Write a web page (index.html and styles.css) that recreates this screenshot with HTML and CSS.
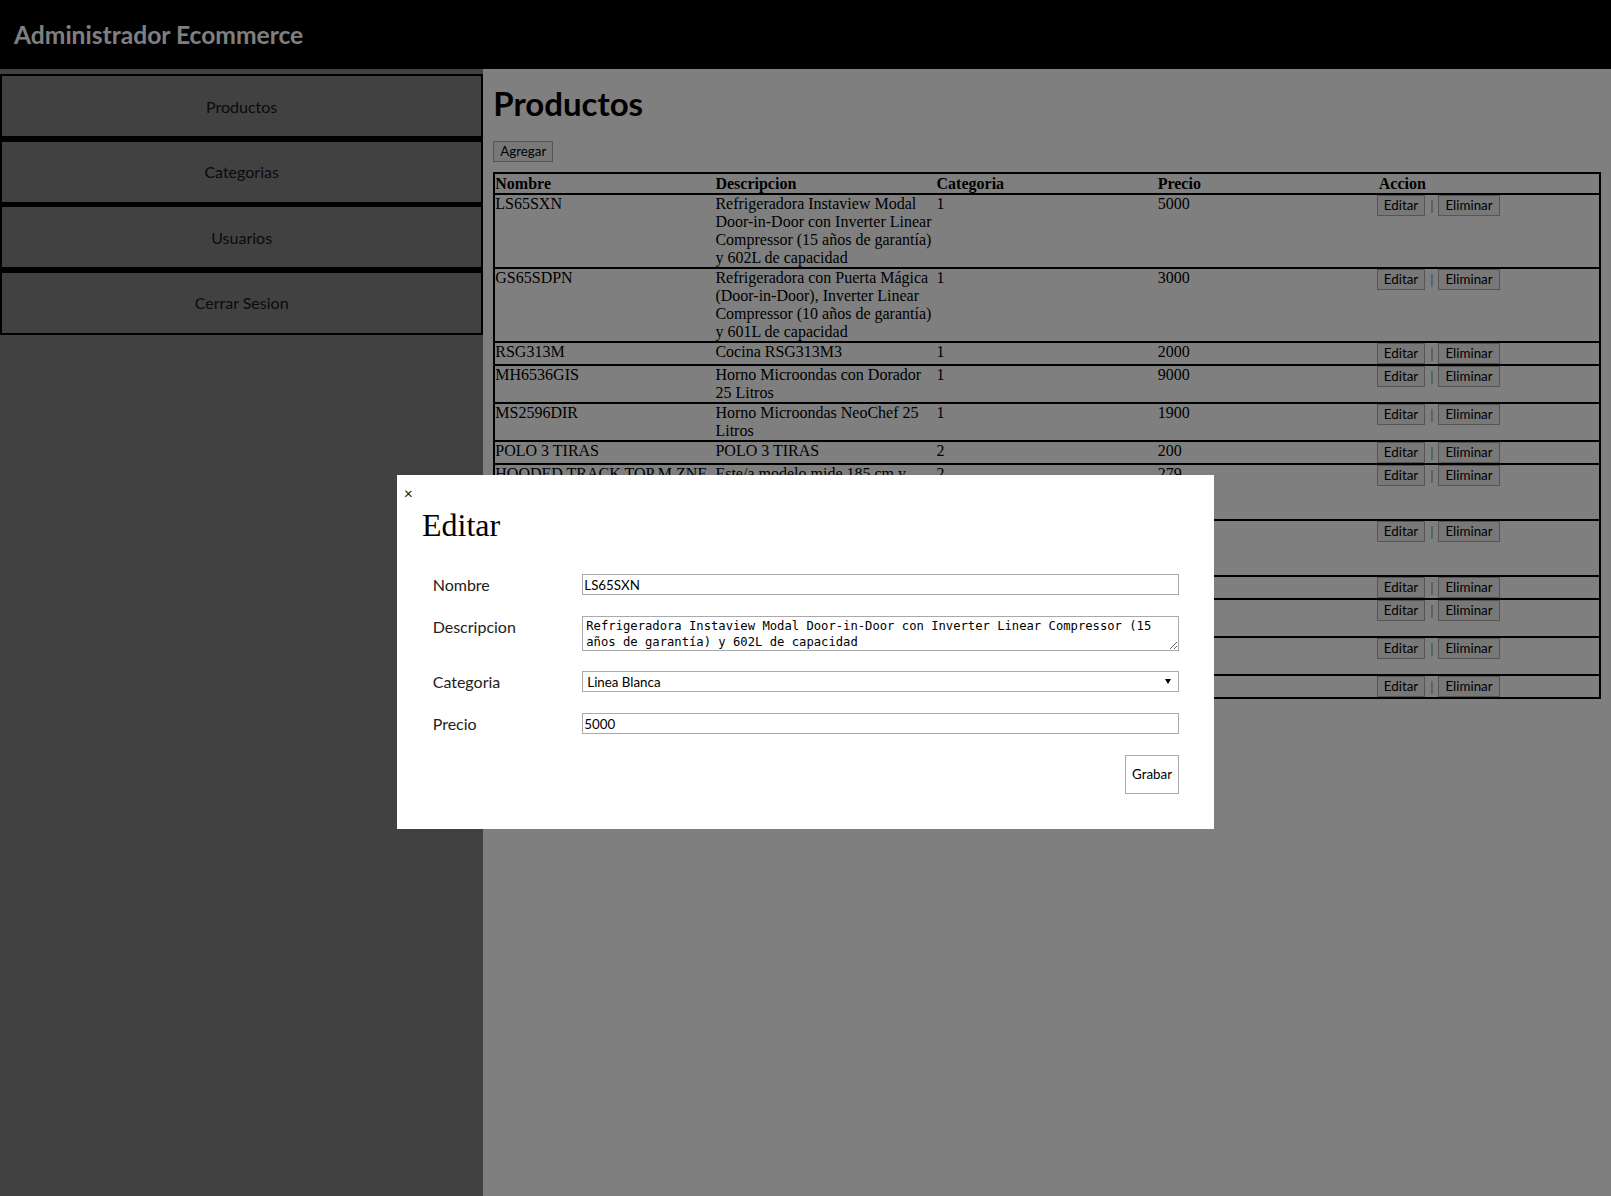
FILE: index.html
```html
<!DOCTYPE html>
<html lang="es">
<head>
<meta charset="utf-8">
<title>Administrador Ecommerce</title>
<link rel="stylesheet" href="styles.css">
</head>
<body>
<header class="topbar"><span class="brand">Administrador Ecommerce</span></header>
<div class="layout">
  <aside class="sidebar">
    <nav class="nav">
      <a class="nav-item" href="#">Productos</a>
      <a class="nav-item" href="#">Categorias</a>
      <a class="nav-item" href="#">Usuarios</a>
      <a class="nav-item" href="#">Cerrar Sesion</a>
    </nav>
  </aside>
  <main class="content">
    <h1 class="page-title">Productos</h1>
    <div class="toolbar"><button class="btn">Agregar</button></div>
    <table class="grid">
      <thead>
        <tr><th>Nombre</th><th>Descripcion</th><th>Categoria</th><th>Precio</th><th>Accion</th></tr>
      </thead>
      <tbody>
        <tr><td>LS65SXN</td><td>Refrigeradora Instaview Modal Door-in-Door con Inverter Linear Compressor (15 años de garantía) y 602L de capacidad</td><td>1</td><td>5000</td><td><div class="actions"><button class="btn">Editar</button><span class="sep">|</span><button class="btn">Eliminar</button></div></td></tr>
        <tr><td>GS65SDPN</td><td>Refrigeradora con Puerta Mágica (Door-in-Door), Inverter Linear Compressor (10 años de garantía) y 601L de capacidad</td><td>1</td><td>3000</td><td><div class="actions"><button class="btn">Editar</button><span class="sep">|</span><button class="btn">Eliminar</button></div></td></tr>
        <tr><td>RSG313M</td><td>Cocina RSG313M3</td><td>1</td><td>2000</td><td><div class="actions"><button class="btn">Editar</button><span class="sep">|</span><button class="btn">Eliminar</button></div></td></tr>
        <tr><td>MH6536GIS</td><td>Horno Microondas con Dorador 25 Litros</td><td>1</td><td>9000</td><td><div class="actions"><button class="btn">Editar</button><span class="sep">|</span><button class="btn">Eliminar</button></div></td></tr>
        <tr><td>MS2596DIR</td><td>Horno Microondas NeoChef 25 Litros</td><td>1</td><td>1900</td><td><div class="actions"><button class="btn">Editar</button><span class="sep">|</span><button class="btn">Eliminar</button></div></td></tr>
        <tr><td>POLO 3 TIRAS</td><td>POLO 3 TIRAS</td><td>2</td><td>200</td><td><div class="actions"><button class="btn">Editar</button><span class="sep">|</span><button class="btn">Eliminar</button></div></td></tr>
        <tr><td>HOODED TRACK TOP M ZNE</td><td>Este/a modelo mide 185 cm y lleva una talla M. Chaqueta deportiva con capucha</td><td>2</td><td>279</td><td><div class="actions"><button class="btn">Editar</button><span class="sep">|</span><button class="btn">Eliminar</button></div></td></tr>
        <tr><td>SUPERSTAR W</td><td>Zapatillas urbanas con puntera de goma, parte superior de cuero y tres franjas</td><td>2</td><td>349</td><td><div class="actions"><button class="btn">Editar</button><span class="sep">|</span><button class="btn">Eliminar</button></div></td></tr>
        <tr><td>GORRA TREFOIL</td><td>Gorra Trefoil</td><td>2</td><td>99</td><td><div class="actions"><button class="btn">Editar</button><span class="sep">|</span><button class="btn">Eliminar</button></div></td></tr>
        <tr><td>TEE ESSENTIALS</td><td>Polera de algodón con logo estampado en el pecho</td><td>2</td><td>89</td><td><div class="actions"><button class="btn">Editar</button><span class="sep">|</span><button class="btn">Eliminar</button></div></td></tr>
        <tr><td>PANT TIRO 19</td><td>Pantalón deportivo con bolsillos laterales y cierre</td><td>2</td><td>159</td><td><div class="actions"><button class="btn">Editar</button><span class="sep">|</span><button class="btn">Eliminar</button></div></td></tr>
        <tr><td>MEDIAS</td><td>Medias tobilleras</td><td>2</td><td>39</td><td><div class="actions"><button class="btn">Editar</button><span class="sep">|</span><button class="btn">Eliminar</button></div></td></tr>
      </tbody>
    </table>
  </main>
</div>
<div class="overlay"></div>
<div class="modal">
  <span class="modal-close">×</span>
  <h2 class="modal-title">Editar</h2>
  <form class="form">
    <div class="form-row">
      <label class="form-label">Nombre</label>
      <input class="form-control" type="text" value="LS65SXN">
    </div>
    <div class="form-row">
      <label class="form-label">Descripcion</label>
      <textarea class="form-control form-textarea">Refrigeradora Instaview Modal Door-in-Door con Inverter Linear Compressor (15 años de garantía) y 602L de capacidad</textarea>
    </div>
    <div class="form-row">
      <label class="form-label">Categoria</label>
      <div class="select-wrap">
        <select class="form-control form-select"><option>Linea Blanca</option><option>Ropa</option></select>
      </div>
    </div>
    <div class="form-row">
      <label class="form-label">Precio</label>
      <input class="form-control" type="text" value="5000">
    </div>
    <div class="form-actions">
      <button class="btn-save" type="button">Grabar</button>
    </div>
  </form>
</div>
</body>
</html>
```
FILE: styles.css
```css
* { box-sizing: border-box; }
html, body { margin: 0; height: 100%; }
body {
  font-family: Lato, "Open Sans", sans-serif;
  background: #fff;
  overflow: hidden;
}

.topbar {
  height: 69px;
  background: #000;
  color: #fff;
  padding-left: 14px;
}
.brand {
  font-size: 24.6px;
  font-weight: 700;
  line-height: 69px;
}

.layout {
  display: grid;
  grid-template-columns: 30% 70%;
  min-height: calc(100vh - 69px);
}

.sidebar {
  background: #828282;
  padding-top: 5px;
}
.nav {
  display: flex;
  flex-direction: column;
  gap: 1.5px;
  background: #000;
}
.nav-item {
  height: 64px;
  border: 2px solid #000;
  background: #828282;
  display: flex;
  align-items: center;
  justify-content: center;
  color: #151515;
  font-size: 16px;
  text-decoration: none;
}

.content {
  background: #fff;
  padding: 10px;
}
.page-title {
  margin: 5px 0 0;
  font-size: 33px;
  font-weight: 700;
  line-height: 38px;
}
.toolbar {
  margin: 18px 0 10px;
}

.btn {
  font-family: Lato, "Open Sans", sans-serif;
  font-size: 13.33px;
  line-height: 17px;
  padding: 1px 6px;
  border: 1px solid #aaa;
  background: #f0f0f0;
  color: #000;
  border-radius: 0;
}

.grid {
  width: 100%;
  border-collapse: collapse;
  border: 2px solid #000;
  table-layout: fixed;
  font-family: "Liberation Serif", "Times New Roman", serif;
  font-size: 16px;
  line-height: 18px;
}
.grid tr { border-bottom: 2px solid #000; }
.grid th, .grid td {
  width: 20%;
  padding: 0;
  text-align: left;
  vertical-align: top;
}
.grid th {
  font-weight: 700;
  padding-top: 1px;
}

.actions {
  display: flex;
  align-items: center;
  margin-left: -2px;
}
.sep {
  margin: 0 5px;
  color: #888;
  font-family: Lato, sans-serif;
  font-size: 13.33px;
}

.overlay {
  position: fixed;
  inset: 0;
  background: rgba(0, 0, 0, 0.5);
}

.modal {
  position: absolute;
  top: 475px;
  left: 397px;
  width: 817px;
  background: #fff;
  padding: 32px 35px 35px 25px;
}
.modal-close {
  position: absolute;
  top: 11px;
  left: 7px;
  font-size: 15px;
  line-height: 14px;
  color: #1a0a0a;
}
.modal-title {
  margin: 0;
  font-family: "Liberation Serif", "Times New Roman", serif;
  font-size: 32px;
  font-weight: 400;
  line-height: 36px;
}

.form {
  margin-top: 31px;
  padding-left: 10.7px;
  display: flex;
  flex-direction: column;
  gap: 20px;
}
.form-row {
  display: flex;
  align-items: flex-start;
}
.form-label {
  width: 149.6px;
  flex: none;
  font-size: 16px;
  line-height: 22px;
  color: #222;
}
.form-control {
  flex: 1;
  width: 100%;
  height: 21px;
  margin: 0;
  border: 1px solid #a9a9a9;
  border-radius: 0;
  background: #fff;
  font-family: Lato, "Open Sans", sans-serif;
  font-size: 13.33px;
  color: #000;
  padding: 1px 1px;
  outline: none;
}
.form-textarea {
  height: 35px;
  padding: 2px 3px;
  font-family: "DejaVu Sans Mono", "Liberation Mono", monospace;
  font-size: 12.2px;
  line-height: 15.6px;
  resize: both;
}
.select-wrap {
  flex: 1;
  position: relative;
}
.form-select {
  display: block;
  appearance: none;
  -webkit-appearance: none;
  padding: 1px 4px;
}
.select-wrap::after {
  content: "";
  position: absolute;
  right: 8px;
  top: 8px;
  border-left: 3px solid transparent;
  border-right: 3px solid transparent;
  border-top: 5px solid #000;
}

.form-actions {
  display: flex;
  justify-content: flex-end;
}
.btn-save {
  font-family: Lato, "Open Sans", sans-serif;
  font-size: 13.33px;
  line-height: 17px;
  padding: 10px 6px;
  border: 1px solid #aaa;
  background: #fff;
  color: #000;
  border-radius: 0;
}
```
